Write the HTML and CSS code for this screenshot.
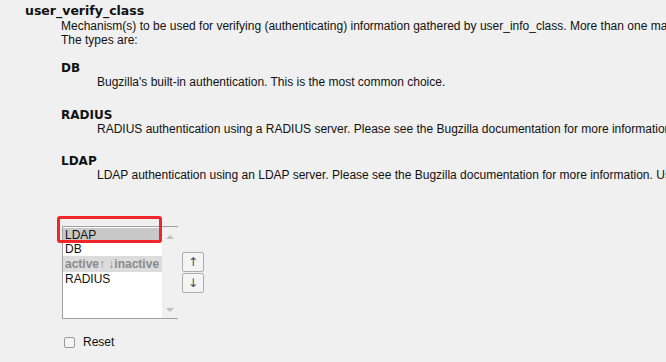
FILE: index.html
```html
<!DOCTYPE html>
<html lang="en">
<head>
<meta charset="UTF-8">
<title>user_verify_class</title>
<link rel="stylesheet" href="styles.css">
</head>
<body>

<div class="param">
    <div class="param-name">user_verify_class</div>
    <div class="param-desc">
        <div>Mechanism(s) to be used for verifying (authenticating) information gathered by user_info_class. More than one may be used.</div>
        <div>The types are:</div>
        <dl class="types">
            <dt>DB</dt>
            <dd>Bugzilla's built-in authentication. This is the most common choice.</dd>
            <dt>RADIUS</dt>
            <dd>RADIUS authentication using a RADIUS server. Please see the Bugzilla documentation for more information.</dd>
            <dt>LDAP</dt>
            <dd>LDAP authentication using an LDAP server. Please see the Bugzilla documentation for more information. Use of LDAP requires configuration.</dd>
        </dl>
    </div>

    <div class="sortable">
        <div class="listbox">
            <div class="options">
                <div class="option selected">LDAP</div>
                <div class="option">DB</div>
                <div class="option separator">active↑ ↓inactive</div>
                <div class="option">RADIUS</div>
            </div>
            <div class="scrollbar">
                <span class="arrow up"></span>
                <span class="arrow down"></span>
            </div>
            <div class="highlight"></div>
        </div>
        <div class="move-buttons">
            <div class="move-btn">↑</div>
            <div class="move-btn">↓</div>
        </div>
    </div>

    <label class="reset">
        <span class="checkbox"></span>
        Reset
    </label>
</div>

</body>
</html>
```

FILE: styles.css
```css
body {
    margin: 0;
    background-color: #f0f0f0;
    font-family: "Liberation Sans", Arial, sans-serif;
    font-size: 12px;
    color: #111;
    overflow: hidden;
}
.param {
    padding: 3px 0 0 25px;
}
.param-name {
    font-family: "DejaVu Sans", Verdana, sans-serif;
    font-weight: bold;
    font-size: 12.5px;
    line-height: 16px;
}
.param-desc {
    margin-left: 36px;
    line-height: 14px;
    white-space: nowrap;
}
.types {
    margin: 14px 0 0 0;
}
.types dt {
    font-family: "DejaVu Sans", Verdana, sans-serif;
    font-weight: bold;
    font-size: 12px;
    line-height: 14px;
}
.types dd {
    margin: 0 0 18.5px 36px;
    line-height: 14px;
}
.sortable {
    display: flex;
    align-items: center;
    margin: 44px 0 0 37px;
}
.listbox {
    position: relative;
    display: flex;
    width: 115px;
    height: 91px;
    border-left: 1px solid #a0a0a0;
    border-bottom: 1px solid #a0a0a0;
    border-top: 1px solid #a0a0a0;
}
.options {
    width: 99px;
    background-color: #fff;
    padding-top: 1px;
}
.option {
    height: 14px;
    line-height: 14px;
    padding-left: 2px;
    font-size: 12px;
}
.option.selected {
    background-color: #c8c8c8;
}
.option.separator {
    background-color: #dcdcdc;
    color: #8a8a8a;
    font-weight: bold;
    height: 16px;
    line-height: 16px;
}
.scrollbar {
    flex: 1;
    display: flex;
    flex-direction: column;
    justify-content: space-between;
    align-items: center;
    padding: 8px 0 6px;
}
.arrow {
    width: 0;
    height: 0;
    border-left: 4px solid transparent;
    border-right: 4px solid transparent;
}
.arrow.up {
    border-bottom: 4px solid #c0c0c0;
}
.arrow.down {
    border-top: 4px solid #c0c0c0;
}
.highlight {
    position: absolute;
    left: -6px;
    top: -11px;
    width: 99px;
    height: 21px;
    border: 3px solid #f0262a;
    border-radius: 3px;
}
.move-buttons {
    display: flex;
    flex-direction: column;
    gap: 1px;
    margin-left: 4px;
}
.move-btn {
    width: 20px;
    height: 18px;
    line-height: 18px;
    text-align: center;
    background-color: #f4f4f4;
    border: 1px solid #adadad;
    border-radius: 2px;
    font-family: "DejaVu Sans", sans-serif;
    font-size: 12px;
    color: #3a4a6a;
}
.reset {
    display: flex;
    align-items: center;
    gap: 8px;
    margin: 16px 0 0 39px;
}
.checkbox {
    width: 9px;
    height: 9px;
    border: 1px solid #999;
    border-radius: 2px;
    background-color: #f4f4f4;
}
```
